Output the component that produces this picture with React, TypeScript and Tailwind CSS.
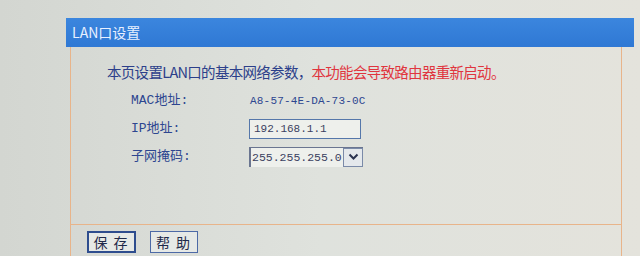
import React from "react";

const mono = "font-['Liberation_Mono','Noto_Sans_CJK_SC',monospace]";

export default function App() {
  return (
    <div className="h-[256px] w-[640px] overflow-hidden bg-gradient-to-r from-[#d3d6d1] via-[#dfe2dd] to-[#e4e3dc] pl-[66px] pt-[18px]">
      <div className="w-[568px]">
        <div className="flex h-[29px] items-center bg-gradient-to-b from-[#3b86de] to-[#2f78d4] pl-[6px] text-[14px] text-[#e8f0ff] font-['Noto_Sans_CJK_SC',sans-serif]">
          LAN口设置
        </div>
        <div className="ml-[4px] mr-[12px] border-x border-[#e8b48a]">
          <div className={`pl-[36px] pt-[14px] ${mono}`}>
            <p className="text-[14.5px] tracking-[-0.7px] text-[#2c3f8a] font-['Noto_Sans_CJK_SC',sans-serif]">
              本页设置LAN口的基本网络参数，
              <span className="text-[#e0353e]">本功能会导致路由器重新启动。</span>
            </p>
            <div className="mt-[8px] flex flex-col gap-[8px] pl-[24px] text-[13px] text-[#2d4690]">
              <div className="flex h-[20px] items-center">
                <span className="w-[119px]">MAC地址:</span>
                <span className="text-[11px] tracking-[0.2px]">A8-57-4E-DA-73-0C</span>
              </div>
              <div className="flex h-[20px] items-center">
                <span className="w-[118px]">IP地址:</span>
                <div className="flex h-[20px] w-[112px] items-center border border-[#5577aa] bg-[#eef0ec] pl-[4px] text-[11px] text-[#3a4060]">
                  192.168.1.1
                </div>
              </div>
              <div className="flex h-[20px] items-center">
                <span className="w-[118px]">子网掩码:</span>
                <div className="flex h-[20px] w-[114px] items-stretch border-l-2 border-t border-[#6a7590] bg-[#eef0ec] text-[11.5px] text-[#3a4060]">
                  <span className="flex flex-1 items-center pl-[1px]">255.255.255.0</span>
                  <span className="flex w-[20px] items-center justify-center border border-[#7a8aa8] bg-[#e4e8ec]">
                    <svg width="11" height="8" viewBox="0 0 11 8" fill="none">
                      <path d="M1.5 1.5l4 4 4-4" stroke="#2a3350" strokeWidth="2" />
                    </svg>
                  </span>
                </div>
              </div>
            </div>
          </div>
          <div className="h-[57px]" />
        </div>
        <div className="ml-[4px] mr-[12px] flex h-[40px] items-start gap-[14px] border-x border-t border-[#e8b48a] pl-[16px] pt-[6px] font-['Noto_Sans_CJK_SC',sans-serif] text-[14px] text-[#1f2a4a]">
          <button className="h-[22px] w-[49px] border-2 border-[#2e4d8e] bg-[#e6e9e6] tracking-[6px] pl-[4px] leading-none">
            保存
          </button>
          <button className="h-[22px] w-[48px] border border-[#4d6aa6] bg-[#e6e9e6] tracking-[6px] pl-[4px] leading-none">
            帮助
          </button>
        </div>
      </div>
    </div>
  );
}
